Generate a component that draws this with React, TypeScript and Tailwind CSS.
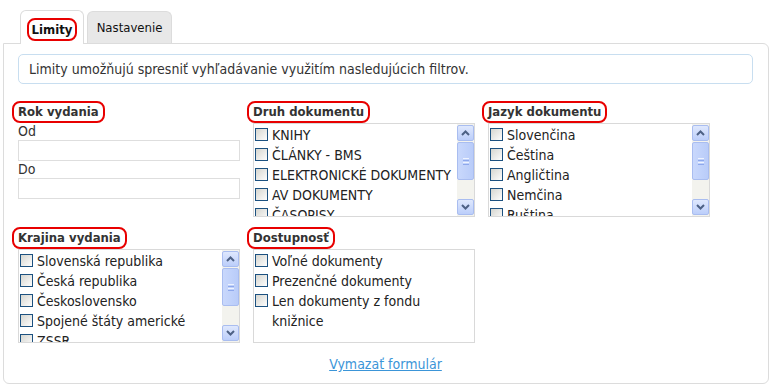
import React from "react"

function ScrollBar() {
    return (
        <div className="w-[17px] flex flex-col bg-[#f3f3ee] py-px">
            <div className="h-[16px] rounded-[2px] border border-[#a9bdf0] bg-linear-to-b from-[#dfe8fd] to-[#bccefa] flex items-center justify-center">
                <svg width="9" height="6" viewBox="0 0 9 6">
                    <path d="M1 5 L4.5 1.5 L8 5" stroke="#4d6185" strokeWidth="2" fill="none" />
                </svg>
            </div>
            <div className="mt-[1px] h-[38px] rounded-[2px] border border-[#a9bdf0] bg-linear-to-r from-[#c9d8fc] to-[#b9ccf9] flex flex-col items-center justify-center gap-[1px]">
                <div className="w-[6px] h-px bg-[#eef3ff]" />
                <div className="w-[6px] h-px bg-[#8ea8ec]" />
                <div className="w-[6px] h-px bg-[#eef3ff]" />
                <div className="w-[6px] h-px bg-[#8ea8ec]" />
            </div>
            <div className="flex-1" />
            <div className="h-[16px] rounded-[2px] border border-[#a9bdf0] bg-linear-to-b from-[#dfe8fd] to-[#bccefa] flex items-center justify-center">
                <svg width="9" height="6" viewBox="0 0 9 6">
                    <path d="M1 1 L4.5 4.5 L8 1" stroke="#4d6185" strokeWidth="2" fill="none" />
                </svg>
            </div>
        </div>
    )
}

function Check({ label, wrap }: { label: string; wrap?: boolean }) {
    return (
        <div className="flex items-start gap-[4px] min-h-[20px]">
            <div className="mt-[3px] w-[13px] h-[13px] shrink-0 border border-[#1c5180] bg-linear-to-br from-[#d6d6d0] to-[#fdfdfd]" />
            <span className={wrap ? "w-[170px] leading-[20px]" : "whitespace-nowrap leading-[20px]"}>{label}</span>
        </div>
    )
}

function Heading({ text }: { text: string }) {
    return (
        <div className="h-[23px] flex items-center">
            <span className="-ml-[6px] inline-flex items-center h-[22px] px-[4px] border-2 border-[#e80000] rounded-[8px] font-bold text-[13px] text-[#333]">
                {text}
            </span>
        </div>
    )
}

function ListBox({ items, scroll = true, wrapLast }: { items: string[]; scroll?: boolean; wrapLast?: boolean }) {
    return (
        <div className="w-[222px] h-[94px] border border-[#d9d9d9] flex bg-white">
            <div className="flex-1 overflow-hidden pl-px pt-[1px] text-[#222]">
                {items.map((it, i) => (
                    <Check key={it} label={it} wrap={wrapLast && i === items.length - 1} />
                ))}
            </div>
            {scroll && <ScrollBar />}
        </div>
    )
}

export default function App() {
    return (
        <div className="w-[778px] h-[388px] bg-white font-['DejaVu_Sans_Condensed','Liberation_Sans',sans-serif] text-[14px] text-[#222] pl-[3px] pt-[9px]">
            <div className="flex items-end pl-[17px] gap-[3px] h-[34px] text-[13px]">
                <div className="relative z-10 -mb-px h-[34px] w-[64px] border border-b-0 border-[#dcdcdc] rounded-t-[6px] bg-white flex justify-center pt-[7px]">
                    <span className="h-[23px] px-[3px] inline-flex items-center border-2 border-[#e80000] rounded-[8px] font-bold text-[#111]">Limity</span>
                </div>
                <div className="h-[32px] w-[85px] border border-b-0 border-[#dcdcdc] rounded-t-[6px] bg-[#e8e8e8] flex items-center justify-center text-[#111]">
                    Nastavenie
                </div>
            </div>
            <div className="w-[766px] h-[341px] border border-[#dcdcdc] rounded-[6px] rounded-tl-none pl-[14px] pr-[15px] pt-[10px]">
                <div className="h-[30px] border border-[#c8def0] rounded-[5px] flex items-center pl-[10px] text-[#333]">
                    Limity umožňujú spresniť vyhľadávanie využitím nasledujúcich filtrov.
                </div>
                <div className="mt-[16px] flex gap-[13px]">
                    <div className="w-[222px]">
                        <Heading text="Rok vydania" />
                        <div className="text-[#333] leading-[16px]">Od</div>
                        <div className="h-[21px] border border-[#dedede] mt-[1px]" />
                        <div className="text-[#333] leading-[16px]">Do</div>
                        <div className="h-[21px] border border-[#dedede] mt-[1px]" />
                    </div>
                    <div className="w-[222px]">
                        <Heading text="Druh dokumentu" />
                        <ListBox items={["KNIHY", "ČLÁNKY - BMS", "ELEKTRONICKÉ DOKUMENTY", "AV DOKUMENTY", "ČASOPISY"]} />
                    </div>
                    <div className="w-[222px]">
                        <Heading text="Jazyk dokumentu" />
                        <ListBox items={["Slovenčina", "Čeština", "Angličtina", "Nemčina", "Ruština"]} />
                    </div>
                </div>
                <div className="mt-[9px] flex gap-[13px]">
                    <div className="w-[222px]">
                        <Heading text="Krajina vydania" />
                        <ListBox items={["Slovenská republika", "Česká republika", "Československo", "Spojené štáty americké", "ZSSR"]} />
                    </div>
                    <div className="w-[222px]">
                        <Heading text="Dostupnosť" />
                        <ListBox scroll={false} wrapLast items={["Voľné dokumenty", "Prezenčné dokumenty", "Len dokumenty z fondu knižnice"]} />
                    </div>
                </div>
                <div className="mt-[11px] flex justify-center">
                    <a href="#" className="text-[#3b95d8] underline">Vymazať formulár</a>
                </div>
            </div>
        </div>
    )
}
